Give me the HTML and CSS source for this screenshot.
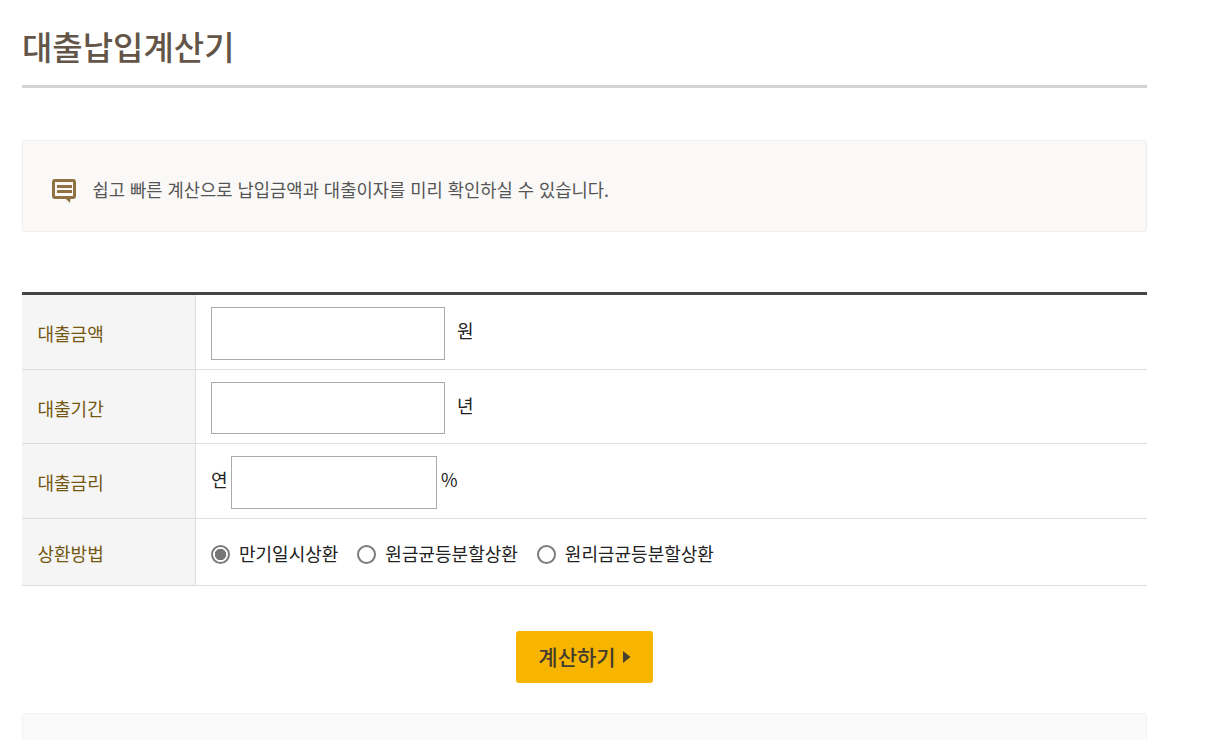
FILE: index.html
```html
<!DOCTYPE html>
<html lang="ko">
<head>
<meta charset="utf-8">
<title>대출납입계산기</title>
<link rel="stylesheet" href="styles.css">
</head>
<body>
<main class="page">
  <h1 class="title">대출납입계산기</h1>
  <div class="notice">
    <svg class="notice-icon" width="24" height="24" viewBox="0 0 24 24" aria-hidden="true">
      <path fill="#8f7144" fill-rule="evenodd" d="M3 0h18a3 3 0 0 1 3 3v14a3 3 0 0 1-3 3h-2.5l-.5 4-4-4H3a3 3 0 0 1-3-3V3a3 3 0 0 1 3-3zm0 3v14h18V3z"/>
      <path fill="#8f7144" d="M5 6h15v3H5zM5 11h15v3H5z"/>
    </svg>
    <p class="notice-text">쉽고 빠른 계산으로 납입금액과 대출이자를 미리 확인하실 수 있습니다.</p>
  </div>
  <table class="form-table">
    <tr class="row-input">
      <th>대출금액</th>
      <td><div class="field"><input class="input" type="text"><span class="unit">원</span></div></td>
    </tr>
    <tr class="row-input">
      <th>대출기간</th>
      <td><div class="field"><input class="input" type="text"><span class="unit">년</span></div></td>
    </tr>
    <tr class="row-input">
      <th>대출금리</th>
      <td><div class="field field-rate"><span>연</span><input class="input input-rate" type="text"><span>%</span></div></td>
    </tr>
    <tr class="row-radio">
      <th>상환방법</th>
      <td>
        <div class="radios">
          <label class="radio"><input type="radio" name="method" checked>만기일시상환</label>
          <label class="radio"><input type="radio" name="method">원금균등분할상환</label>
          <label class="radio"><input type="radio" name="method">원리금균등분할상환</label>
        </div>
      </td>
    </tr>
  </table>
  <div class="actions">
    <button class="calc" type="button">계산하기<svg class="calc-arrow" width="8" height="12" viewBox="0 0 8 12" aria-hidden="true"><path fill="#4a4030" d="M0 0l7.5 6L0 12z"/></svg></button>
  </div>
  <div class="result"></div>
</main>
</body>
</html>
```
FILE: styles.css
```css
html, body { margin: 0; padding: 0; background: #fff; overflow: hidden; height: 740px; }
body { font-family: "Noto Sans CJK KR", "Noto Sans", sans-serif; color: #333; }
.page { width: 1125px; margin-left: 22px; }
.title {
  margin: 0; height: 85px; border-bottom: 3px solid #d5d2cf;
  font-size: 33px; font-weight: 500; line-height: 92px; color: #635648; letter-spacing: 0;
  box-sizing: content-box;
}
.notice {
  margin-top: 52px; height: 90px; border: 1px solid #f0eeec; border-radius: 3px;
  background: #faf9f7; display: flex; align-items: center; padding-left: 29px; gap: 16.5px;
}
.notice-icon { flex: none; margin-top: 10px; }
.notice-text { margin: 5px 0 0; font-size: 17.7px; color: #555; }
.form-table {
  margin-top: 60px; width: 100%; border-collapse: separate; border-spacing: 0;
  border-top: 3px solid #444; table-layout: fixed;
}
.form-table th, .form-table td { box-sizing: border-box; border-bottom: 1px solid #ddd; font-size: 18px; }
.form-table th {
  width: 174px; padding: 3px 0 0 15.5px; background: #f5f5f5; border-right: 1px solid #ddd;
  text-align: left; font-weight: 400; color: #745710;
}
.form-table td { padding: 0 0 0 15px; color: #222; }
.row-input th, .row-input td { height: 74.5px; }
.row-radio th, .row-radio td { height: 67px; }
.field { display: flex; align-items: center; gap: 12px; }
.field-rate { gap: 3px; }
.unit { margin-top: -3px; }
.field-rate span { margin-top: -3px; }
.input {
  width: 234px; height: 52.5px; box-sizing: border-box; border: 1px solid #aaa;
  margin: 3px 0 0; padding: 0; background: #fff;
}
.input-rate { width: 206px; }
.field-rate .input-rate { margin-right: 1.5px; }
.radios { display: flex; align-items: center; gap: 19px; padding-top: 3px; }
.radio { display: flex; align-items: center; gap: 9px; }
.radio input {
  appearance: none; box-sizing: border-box; width: 19px; height: 19px; margin: 2px 0 0;
  border: 2px solid #7c7c7c; border-radius: 50%; background: #fff;
}
.radio input:checked { background: radial-gradient(circle, #767676 0 5.4px, #fff 6px); }
.actions { display: flex; justify-content: center; margin-top: 45px; }
.calc {
  width: 137px; height: 52px; border: 0; border-radius: 3px; background: #f7b500;
  font-family: inherit; font-size: 21px; font-weight: 500; color: #443c2c;
  display: flex; align-items: center; justify-content: center; gap: 7px; padding: 0 0 2px;
}
.calc-arrow { margin-top: 2px; }
.result { margin-top: 30px; height: 60px; border: 1px solid #f2f2f0; background: #fafafa; border-radius: 3px; }
```
